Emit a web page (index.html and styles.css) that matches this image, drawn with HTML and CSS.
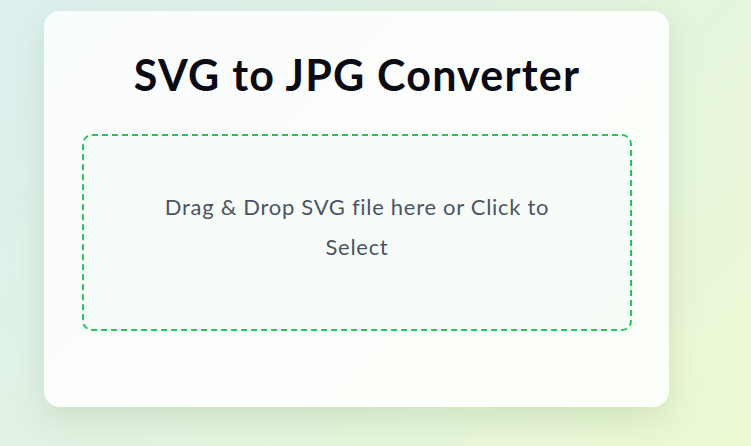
FILE: index.html
```html
<!DOCTYPE html>
<html lang="en">
<head>
<meta charset="utf-8">
<title>SVG to JPG Converter</title>
<link rel="stylesheet" href="styles.css">
</head>
<body>
  <main class="page">
    <section class="card">
      <h1 class="title">SVG to JPG Converter</h1>
      <div class="dropzone">
        <p class="drop-text">Drag &amp; Drop SVG file here or Click to Select</p>
      </div>
    </section>
  </main>
</body>
</html>
```
FILE: styles.css
```css
html, body {
  margin: 0;
  padding: 0;
  height: 100%;
}
body {
  font-family: Lato, "Noto Sans", sans-serif;
  background: linear-gradient(135deg, #dcf0f0 0%, #e3f3e2 45%, #ebfad2 100%);
  overflow: hidden;
}
.page {
  padding: 11px 0 0 44px;
}
.card {
  box-sizing: border-box;
  width: 625px;
  height: 396px;
  padding: 40px 37px 76px 38px;
  background: rgba(255, 255, 255, 0.85);
  border-radius: 16px;
  box-shadow: 0 12px 32px rgba(80, 120, 60, 0.16);
  display: flex;
  flex-direction: column;
}
.title {
  margin: 0 0 35px;
  text-align: center;
  font-size: 43px;
  line-height: 48px;
  letter-spacing: 1.2px;
  font-weight: 700;
  color: #0b0b16;
}
.dropzone {
  box-sizing: border-box;
  flex: 1;
  border: 2px dashed #22c55e;
  border-radius: 10px;
  display: flex;
  align-items: center;
  justify-content: center;
  background: rgba(240, 248, 244, 0.35);
}
.drop-text {
  margin: 0 0 12px;
  width: 410px;
  text-align: center;
  font-size: 22px;
  line-height: 40px;
  letter-spacing: 0.7px;
  color: #4b5563;
}
```
